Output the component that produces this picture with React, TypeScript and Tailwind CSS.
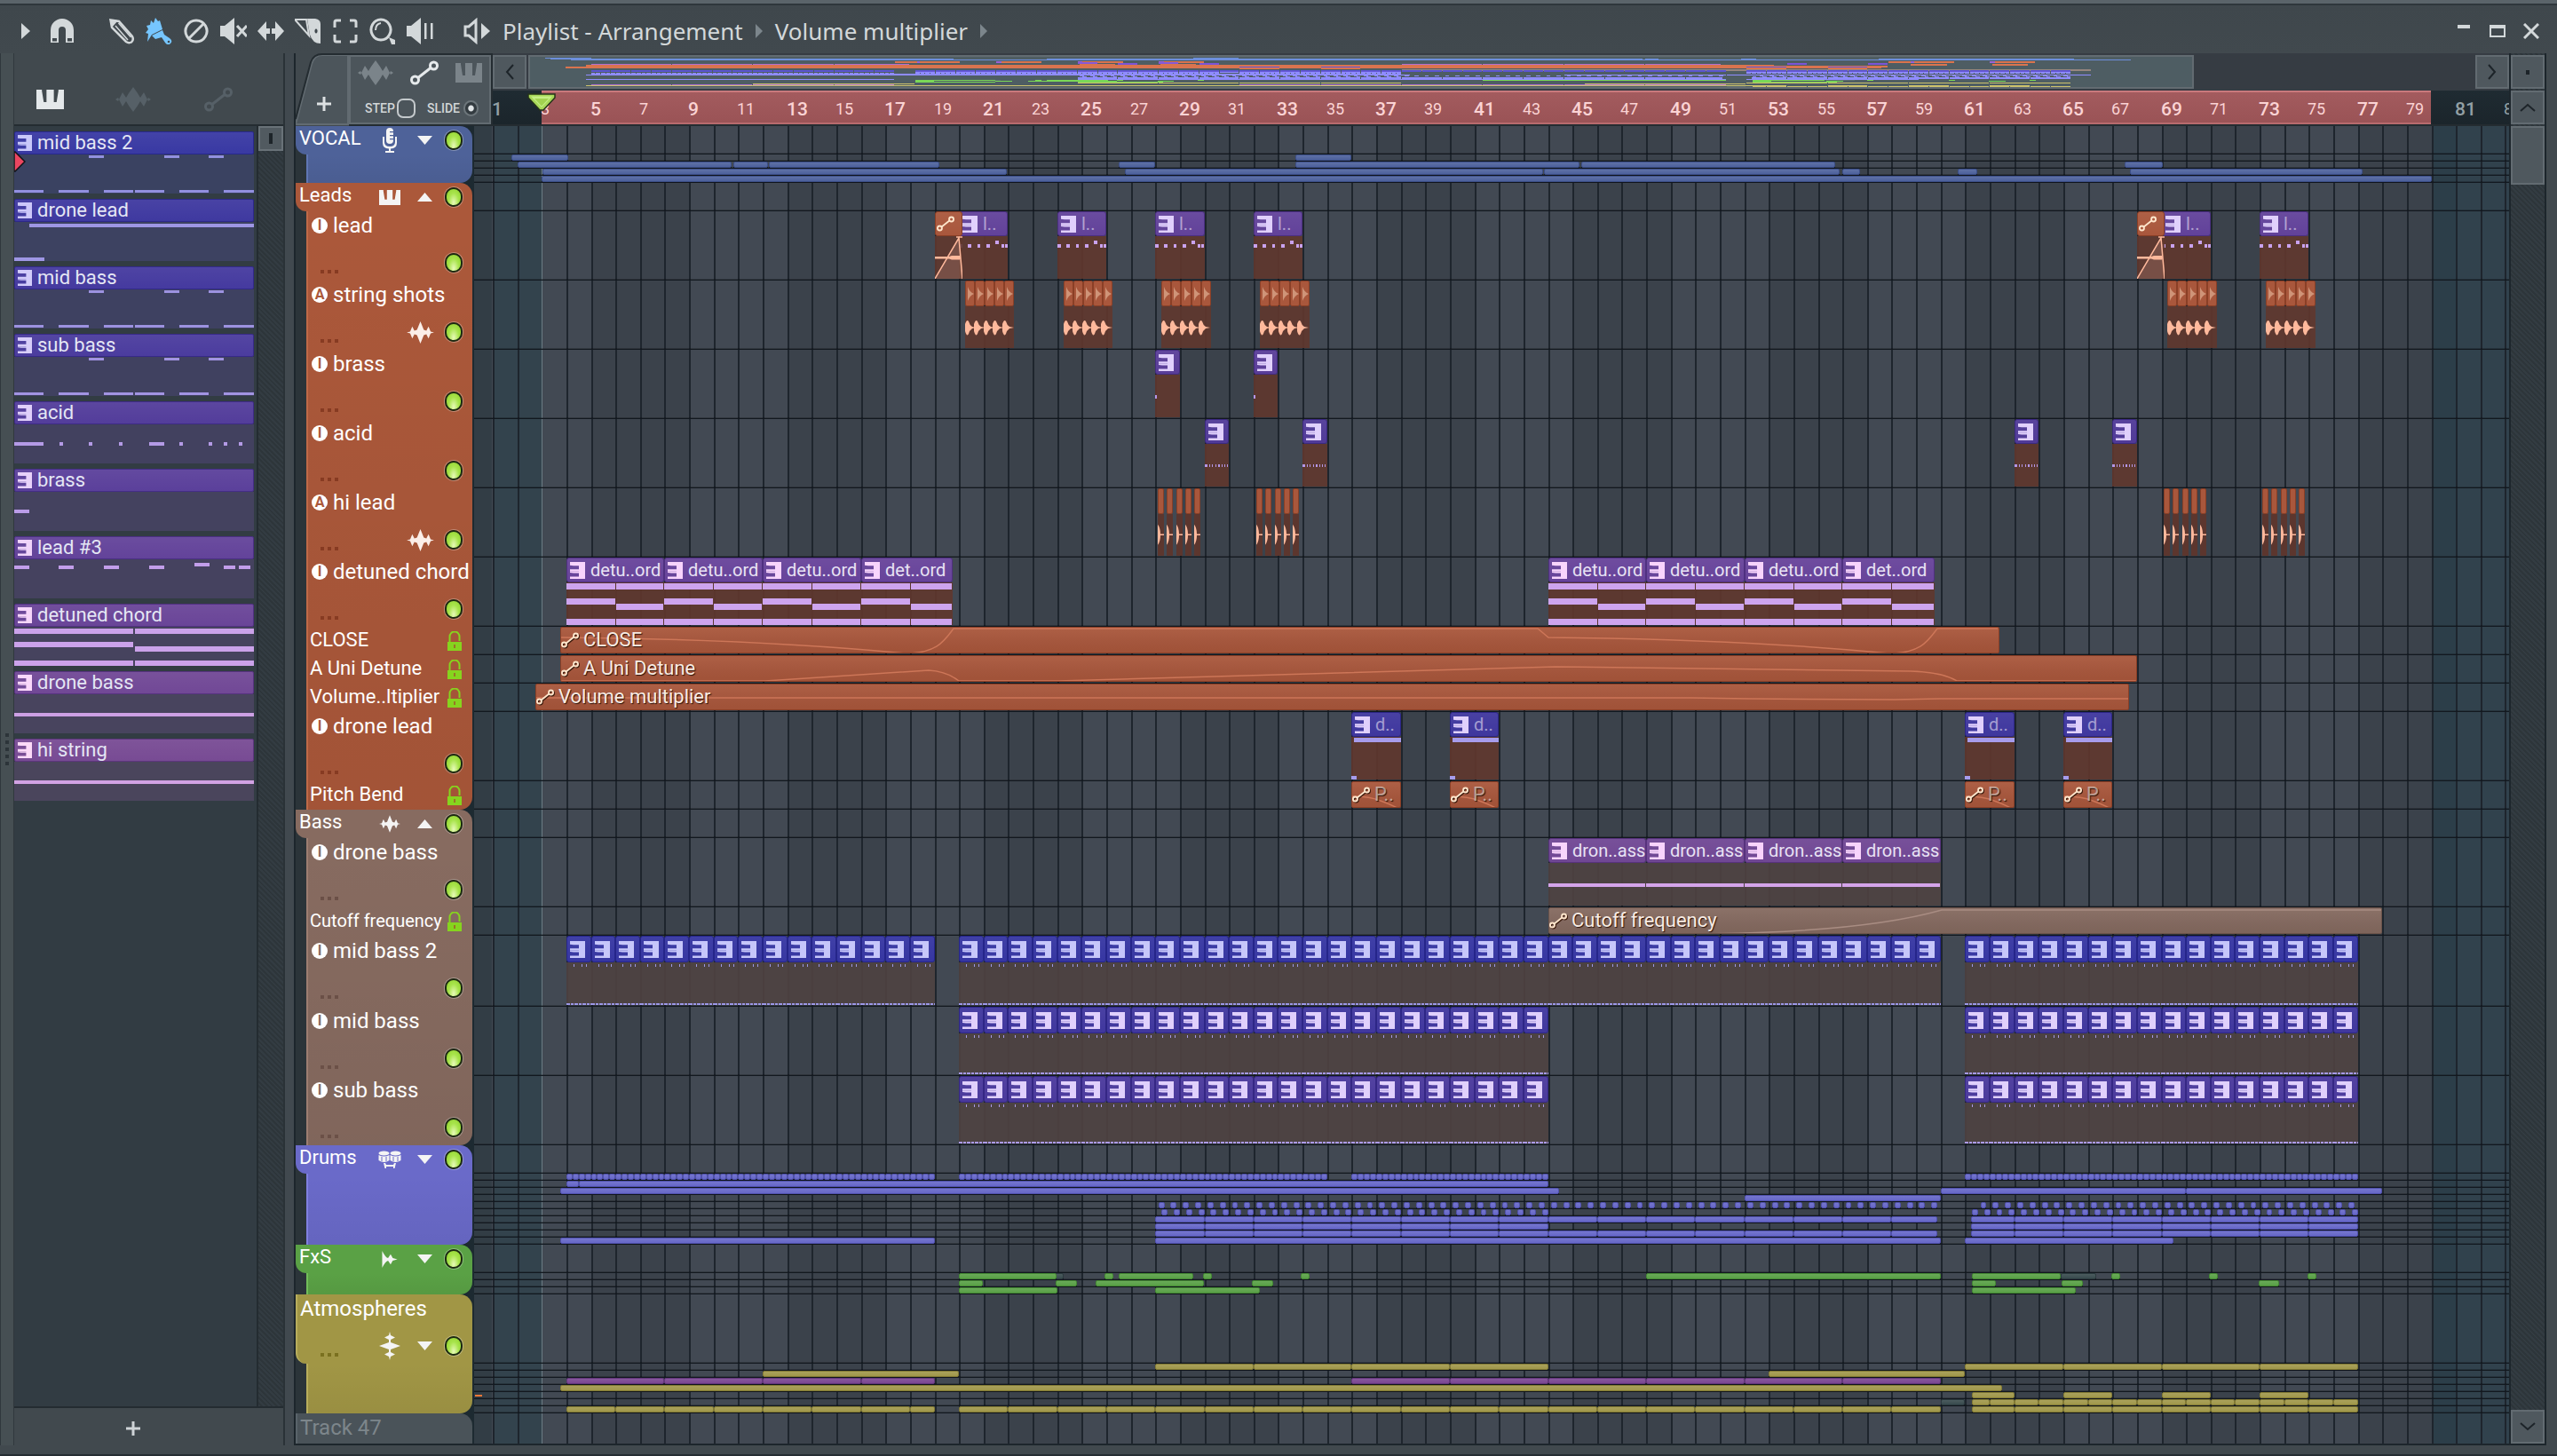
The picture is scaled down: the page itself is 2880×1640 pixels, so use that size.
import React from "react";

/* ---------- timeline scale ---------- */

const BAR = 27.64;
const ORIGIN = 21;
const MINI_BAR = 22.84;
const barX = (bar: number) => Math.round((bar - 1) * BAR + ORIGIN);

/* ---------- colours ---------- */

type Tone =
  | "vocal"
  | "orange"
  | "brown"
  | "drums"
  | "green"
  | "olive"
  | "violet"
  | "ghost"
  | "lead"
  | "brass"
  | "acid"
  | "detuned"
  | "droneLead"
  | "droneBass"
  | "midBass2"
  | "midBass"
  | "subBass";

const toneBg: Record<Tone, string> = {
  vocal: "bg-[#4d619c] border-[#3c4f88]",
  orange: "bg-[#a9573c] border-[#8a3f26]",
  brown: "bg-[#856a60] border-[#6b534a]",
  drums: "bg-[#6667c8] border-[#5051ac]",
  green: "bg-[#59a046] border-[#448834]",
  olive: "bg-[#a0974a] border-[#827a34]",
  violet: "bg-[#7a4692] border-[#63367c]",
  ghost: "bg-[#384a4d] border-[#2b3a3e]",
  lead: "bg-[#62429a] border-[#4b2f82]",
  brass: "bg-[#593d98] border-[#432b80]",
  acid: "bg-[#503a98] border-[#3b2980]",
  detuned: "bg-[#67439a] border-[#4f3080]",
  droneLead: "bg-[#3f379e] border-[#2c2686]",
  droneBass: "bg-[#704794] border-[#57327c]",
  midBass2: "bg-[#3636a2] border-[#25258a]",
  midBass: "bg-[#40379e] border-[#2d2686]",
  subBass: "bg-[#4a399c] border-[#352784]",
};

const noteFill: Record<string, string> = {
  lead: "#c9a2ee",
  brass: "#b896ea",
  acid: "#b496e6",
  detuned: "#cda4ee",
  droneLead: "#a79cec",
  droneBass: "#d4a4ea",
  midBass2: "#9c98e8",
  midBass: "#a69ae8",
  subBass: "#ac9ae8",
};

const miniFill: Record<Tone, string> = {
  vocal: "#6d8fdc",
  orange: "#d9744f",
  brown: "#97867f",
  drums: "#8f8cff",
  green: "#7ad858",
  olive: "#cdc26c",
  violet: "#b070d0",
  ghost: "#5a6c70",
  lead: "#9a62d8",
  brass: "#8458d8",
  acid: "#7a54d8",
  detuned: "#b070d0",
  droneLead: "#6058d8",
  droneBass: "#b070c8",
  midBass2: "#5a54d0",
  midBass: "#6658d8",
  subBass: "#8f8cff",
};

/* ---------- clips ---------- */

type Shape =
  | "thin"
  | "auto"
  | "lead"
  | "fade"
  | "hits"
  | "slices"
  | "brass"
  | "acid"
  | "chord"
  | "droneLead"
  | "droneBass"
  | "bass";

interface Clip {
  start: number;
  end: number;
  tone: Tone;
  shape: Shape;
  label?: string;
  faint?: boolean;
  curve?: string;
}

const thin = (tone: Tone, spans: number[][]): Clip[] =>
  spans.map(([start, end]) => ({ start, end, tone, shape: "thin" }));

function run(tone: Tone, from: number, to: number, step: number, size = step): Clip[] {
  const out: Clip[] = [];
  for (let b = from; b < to - 0.05; b += step) {
    out.push({ start: b, end: Math.min(b + size, to), tone, shape: "thin" });
  }
  return out;
}

const each = (starts: number[], length: number, tone: Tone, shape: Shape, extra: Partial<Clip> = {}): Clip[] =>
  starts.map((start) => ({ start, end: start + length, tone, shape, ...extra }));

const bars = (from: number, to: number) => Array.from({ length: to - from }, (_, i) => from + i);

interface Track {
  name: string;
  size: "big" | "tall" | "lock" | "sub";
  badge?: "I" | "A";
  wave?: boolean;
  long?: boolean;
  clips: Clip[];
}

interface Group {
  name: string;
  color: string;
  edge: string;
  dots: string;
  icon: "mic" | "piano" | "wave" | "drums" | "decay" | "waveUp";
  open: boolean;
  big?: boolean;
  tracks: Track[];
}

const sub = (clips: Clip[]): Track => ({ name: "", size: "sub", clips });

const pitchCurve = "M0 16 Q20 16 32 21 Q46 26 54 31";

const groups: Group[] = [
  {
    name: "VOCAL",
    color: "bg-[#4e6299]",
    edge: "border-[#6076b4]",
    dots: "bg-[#2e3c66]",
    icon: "mic",
    open: false,
    tracks: [
      sub(thin("vocal", [[1.75, 4.08], [33.7, 36]])),
      sub(thin("vocal", [[2, 10.75], [10.8, 12.2], [12.25, 19.2], [26.5, 28], [33.7, 45.3], [45.35, 55.7], [67.5, 69.05]])),
      sub(thin("vocal", [[3.02, 21.95], [26.75, 43.8], [43.85, 55.9], [56, 56.7], [60.7, 61.5], [67.7, 77.2]])),
      sub(thin("vocal", [[3, 80]])),
    ],
  },
  {
    name: "Leads",
    color: "bg-[#ab583a]",
    edge: "border-[#be6a48]",
    dots: "bg-[#873b22]",
    icon: "piano",
    open: true,
    tracks: [
      {
        name: "lead",
        size: "big",
        badge: "I",
        clips: [
          ...each([20, 24, 28, 32, 69, 73], 2, "lead", "lead", { label: "l..", faint: true }),
          ...each([19, 68], 1.13, "orange", "fade"),
        ],
      },
      {
        name: "string shots",
        size: "big",
        badge: "A",
        wave: true,
        clips: each([20.23, 24.25, 28.25, 32.25, 69.25, 73.25], 2.02, "orange", "hits"),
      },
      { name: "brass", size: "big", badge: "I", clips: each([28, 32], 1, "brass", "brass") },
      { name: "acid", size: "big", badge: "I", clips: each([30, 34, 63, 67], 1, "acid", "acid") },
      { name: "hi lead", size: "big", badge: "A", wave: true, clips: each([28.1, 32.1, 69.1, 73.1], 1.8, "orange", "slices") },
      {
        name: "detuned chord",
        size: "big",
        badge: "I",
        clips: [
          ...each([4, 8, 12, 44, 48, 52], 4, "detuned", "chord", { label: "detu..ord" }),
          ...each([16, 56], 3.74, "detuned", "chord", { label: "det..ord" }),
        ],
      },
      {
        name: "CLOSE",
        size: "lock",
        clips: [
          {
            start: 3.75,
            end: 62.38,
            tone: "orange",
            shape: "auto",
            label: "CLOSE",
            curve: "M0 11 Q220 13 388 29 C424 29 432 14 442 1 H1100 L1112 11 Q1332 13 1496 29 C1532 29 1540 14 1550 1 H1618",
          },
        ],
      },
      {
        name: "A Uni Detune",
        size: "lock",
        clips: [
          {
            start: 3.75,
            end: 68,
            tone: "orange",
            shape: "auto",
            label: "A Uni Detune",
            curve: "M0 28 H230 L414 16 Q434 17 448 28 H560 L1120 12 L1520 17 Q1556 18 1572 28 H1776",
          },
        ],
      },
      {
        name: "Volume..ltiplier",
        size: "lock",
        clips: [
          {
            start: 2.73,
            end: 67.68,
            tone: "orange",
            shape: "auto",
            label: "Volume multiplier",
            curve: "M0 15 H1300 Q1420 17 1530 17 L1580 16 H1794",
          },
        ],
      },
      {
        name: "drone lead",
        size: "big",
        badge: "I",
        clips: each([36, 40, 61, 65], 2, "droneLead", "droneLead", { label: "d..", faint: true }),
      },
      {
        name: "Pitch Bend",
        size: "lock",
        clips: each([36, 40, 61, 65], 2, "orange", "auto", { label: "P..", faint: true, curve: pitchCurve }),
      },
    ],
  },
  {
    name: "Bass",
    color: "bg-[#876b60]",
    edge: "border-[#9c7e72]",
    dots: "bg-[#6b5047]",
    icon: "wave",
    open: true,
    tracks: [
      { name: "drone bass", size: "big", badge: "I", clips: each([44, 48, 52, 56], 4, "droneBass", "droneBass", { label: "dron..ass" }) },
      {
        name: "Cutoff frequency",
        size: "lock",
        long: true,
        clips: [
          {
            start: 44,
            end: 78,
            tone: "brown",
            shape: "auto",
            label: "Cutoff frequency",
            curve: "M0 29 H160 Q350 28 442 2 H940",
          },
        ],
      },
      { name: "mid bass 2", size: "tall", badge: "I", clips: each([...bars(4, 19), ...bars(20, 60), ...bars(61, 77)], 1, "midBass2", "bass") },
      { name: "mid bass", size: "big", badge: "I", clips: each([...bars(20, 44), ...bars(61, 77)], 1, "midBass", "bass") },
      { name: "sub bass", size: "big", badge: "I", clips: each([...bars(20, 44), ...bars(61, 77)], 1, "subBass", "bass") },
    ],
  },
  {
    name: "Drums",
    color: "bg-[#6a6ac9]",
    edge: "border-[#8080e0]",
    dots: "bg-[#4747a0]",
    icon: "drums",
    open: false,
    tracks: [
      sub([...run("drums", 4, 19, 0.25), ...run("drums", 20, 35, 0.25), ...run("drums", 36, 44, 0.25), ...run("drums", 61, 77, 0.25)]),
      sub(thin("drums", [[4, 4.5], [4.5, 44]])),
      sub(thin("drums", [[3.75, 44.45], [60, 70], [70, 78]])),
      sub(thin("drums", [[52, 60]])),
      sub([...run("drums", 28.12, 60, 0.5, 0.25), ...run("drums", 61.62, 77, 0.5, 0.25)]),
      sub([...run("drums", 28.25, 44.05, 0.5, 0.25), ...run("drums", 61.27, 77, 0.5, 0.25)]),
      sub([...run("drums", 28, 58, 2), ...thin("drums", [[58, 59.85], [61.25, 63]]), ...run("drums", 63, 77, 2)]),
      sub([...run("drums", 28, 44, 2), ...thin("drums", [[61.25, 63]]), ...run("drums", 63, 77, 2)]),
      sub([...run("drums", 28, 58, 2), ...thin("drums", [[58, 59.85], [61.25, 63]]), ...run("drums", 63, 77, 2)]),
      sub(thin("drums", [[3.75, 19], [28, 60], [61, 69.5]])),
    ],
  },
  {
    name: "FxS",
    color: "bg-[#5aa145]",
    edge: "border-[#72bd5a]",
    dots: "bg-[#3c7a2e]",
    icon: "decay",
    open: false,
    tracks: [
      sub([
        ...thin("ghost", [[23.9, 24.27], [64.9, 66.35]]),
        ...thin("green", [
          [20, 23.97], [25.93, 26.28], [26.5, 29.53], [29.95, 30.3], [33.93, 34.27], [48, 60],
          [61.27, 64.9], [66.95, 67.3], [70.95, 71.3], [74.95, 75.3],
        ]),
      ]),
      sub(thin("green", [[20, 20.98], [23.93, 24.8], [25.57, 29.97], [31.95, 32.8], [61.27, 62.25], [64.93, 65.78], [72.95, 73.8]])),
      sub(thin("green", [[20, 24], [28, 32.25], [61.27, 65.5]])),
    ],
  },
  {
    name: "Atmospheres",
    color: "bg-[#a19645]",
    edge: "border-[#b8ae5c]",
    dots: "bg-[#7a701f]",
    icon: "waveUp",
    open: false,
    big: true,
    tracks: [
      sub([...run("olive", 28, 44, 4), ...run("olive", 61, 77, 4)]),
      sub(thin("olive", [[12, 20], [53, 61]])),
      sub([...run("violet", 4, 19, 4), ...run("violet", 36, 60, 4)]),
      sub(thin("olive", [[3.75, 62.5]])),
      sub(thin("olive", [[61.27, 63], [65, 67], [69, 71], [73, 75]])),
      sub([...thin("ghost", [[60, 61]]), ...thin("olive", [[61.27, 62]]), ...run("olive", 62, 77, 1)]),
      sub([...run("olive", 4, 19, 2), ...run("olive", 20, 60, 2), ...thin("olive", [[61.27, 63]]), ...run("olive", 63, 77, 2)]),
    ],
  },
];

/* ---------- icons ---------- */

function PianoIcon({ className = "" }: { className?: string }) {
  return (
    <svg viewBox="0 0 30 22" className={className} fill="currentColor" preserveAspectRatio="none">
      <path d="M0 0h6v1.500L8 14h3V0h8v14h3l2-12.500V0h6v22H0z" />
    </svg>
  );
}

function WaveIcon({ className = "" }: { className?: string }) {
  return (
    <svg viewBox="0 0 40 28" className={className} fill="currentColor">
      <path d="M0 14 L3 12 L4 14 L8 6 L12 12 L15 7 L20 0 L25 7 L28 12 L32 6 L36 14 L37 12 L40 14 L37 16 L36 14 L32 22 L28 16 L25 21 L20 28 L15 21 L12 16 L8 22 L4 14 L3 16 Z" />
    </svg>
  );
}

function SmallWaveIcon({ className = "" }: { className?: string }) {
  return (
    <svg viewBox="0 0 32 26" className={className} fill="currentColor">
      <path d="M0 13l4-1 2.500-6 2.500 5 3-1 4-10 4 10 3 1 2.500-5 2.500 6 4 1-4 1-2.500 6-2.500-5-3 1-4 10-4-10-3-1-2.500 5L4 14z" />
    </svg>
  );
}

function AutoIcon({ className = "", stroke = 3 }: { className?: string; stroke?: number }) {
  return (
    <svg viewBox="0 0 32 28" className={className} fill="none" stroke="currentColor" strokeWidth={stroke}>
      <circle cx="5.500" cy="22" r="4" />
      <circle cx="26.500" cy="6" r="4" />
      <path d="M9 19.500 L23 8.500" />
    </svg>
  );
}

function PatternIcon({ className = "" }: { className?: string }) {
  return (
    <svg viewBox="0 0 17 19" className={className} fill="currentColor">
      <path d="M0 0h17v19H0v-2.500h10v-4H4L0 12v-1h10v-.2H0V8.200h10v-4H4L0 3.800V2.500h0z" />
      <path d="M0 3.500h10v5H0z" fillOpacity="0" />
      <path d="M0 2.500h10v2H0zM0 11h10v1H0z" fillOpacity="0" />
    </svg>
  );
}

function GroupIcon({ kind }: { kind: Group["icon"] }) {
  if (kind === "mic")
    return (
      <svg viewBox="0 0 16 28" className="h-7 w-4" fill="currentColor">
        <rect x="4" y="0" width="8" height="18" rx="4" />
        <path d="M0 10h2v6q0 5 6 5t6-5v-6h2v7q0 6-7 6.500V26h4v2H3v-2h4v-2.500Q0 23 0 17z" />
        <path d="M8 4h5v1.200H8zM8 8h5v1.200H8zM8 12h5v1.200H8z" fill="#4e6299" />
      </svg>
    );
  if (kind === "piano") return <PianoIcon className="h-[17px] w-6" />;
  if (kind === "wave") return <SmallWaveIcon className="h-5 w-6" />;
  if (kind === "drums")
    return (
      <svg viewBox="0 0 26 20" className="h-5 w-[26px]" fill="currentColor">
        <ellipse cx="6.500" cy="3" rx="6" ry="2.500" />
        <ellipse cx="19.500" cy="3" rx="6" ry="2.500" />
        <path d="M.5 5q6 3 12 0v6q-6 4-12 0zM13.500 5q6 3 12 0v6q-6 4-12 0z" />
        <path d="M4 7v5M9 7v5M17 7v5M22 7v5" stroke="#6a6ac9" strokeWidth="1" />
        <path d="M6 14h2l1 2h8l1-2h2l-1.500 6h-1.500v-2H9v2H7.500z" />
      </svg>
    );
  if (kind === "decay")
    return (
      <svg viewBox="0 0 18 20" className="h-[19px] w-[18px]" fill="currentColor">
        <path d="M0 0 Q4 8 7 8.500 L10 4 L12.500 8.500 L18 10 L12.500 11.500 L10 16 L7 11.500 Q4 12 0 20z" />
      </svg>
    );
  return (
    <svg viewBox="0 0 24 32" className="h-8 w-6" fill="currentColor">
      <path d="M12 0l1 4 5 2.500-5 2.500v3l11 4-11 4v3l5 2.500-5 2.500-1 4-1-4-5-2.500 5-2.500v-3L0 16l11-4V9L6 6.500 11 4z" />
    </svg>
  );
}

function Led() {
  return (
    <button
      aria-label="Mute switch"
      className="h-[22px] w-5 shrink-0 rounded-full border-2 border-[#1c2a12] bg-radial-[at_50%_85%] from-[#e8fab8] via-[#a8e44c] to-[#8cd026] shadow-[0_0_0_1px_rgba(255,255,255,0.3)]"
    />
  );
}

function Lock() {
  return (
    <svg viewBox="0 0 16 22" className="h-[22px] w-4 shrink-0 text-[#86d41e]" fill="currentColor">
      <path d="M2.500 12V6a5.500 5.500 0 0 1 11 0v5" fill="none" stroke="currentColor" strokeWidth="2" />
      <path d="M0 12h16v10H0z" />
      <path d="M7.300 15h1.400v4H7.300z" fill="#a0502c" />
    </svg>
  );
}

/* ---------- title bar ---------- */

const toolIcons: { name: string; active?: boolean; art: React.ReactNode }[] = [
  {
    name: "Draw",
    art: (
      <>
        <path d="M2.500 2.500 L12 4 L27 21 Q29 25 26 27.500 Q23 29 20 27 L4 11z" fill="none" stroke="currentColor" strokeWidth="2.500" />
        <path d="M8 9 L22 25 M11.500 6 L25.500 22" stroke="currentColor" strokeWidth="1.500" />
        <path d="M2 2l9 1-7 8z" />
      </>
    ),
  },
  {
    name: "Paint",
    active: true,
    art: (
      <>
        <path d="M1 9 L5 8 L6 3 L9 6 L11 0 L14 4 L16 3 L19 13 L7 19 L2 27 L3 18 L0 17 L3 13z" />
        <path d="M7 20 L19 14 L21 19 L27 23 Q31 26 28 29 Q25 32 22 28 L18 22 L11 24z" />
        <circle cx="26" cy="27" r="1.300" fill="#40484e" />
      </>
    ),
  },
  {
    name: "Delete",
    art: <path d="M15 3a12 12 0 1 0 .01 0M23.500 6.500l-17 17" fill="none" stroke="currentColor" strokeWidth="3" />,
  },
  {
    name: "Mute",
    art: (
      <>
        <path d="M0 9h5L16 0v30L5 21H0Q-1 15 0 9z" />
        <path d="M19 9l11 12M30 9L19 21" stroke="currentColor" strokeWidth="3" />
      </>
    ),
  },
  {
    name: "Slip",
    art: (
      <>
        <path d="M0 15L10 4v8h4v6h-4v8z" />
        <path d="M30 15L20 4v8h-4v6h4v8z" />
      </>
    ),
  },
  {
    name: "Slice",
    art: (
      <>
        <path d="M0 2h13l3 18L0 2z" fill="none" stroke="currentColor" strokeWidth="2" />
        <path d="M14 1h9q6 1 6 6v22q-9 0-12-10zM24 12.500a1.600 2.500 0 1 0 .01 0z" fillRule="evenodd" />
      </>
    ),
  },
  {
    name: "Select",
    art: (
      <path
        d="M3 11V5q0-2 2-2h5M20 3h5q2 0 2 2v6M27 19v6q0 2-2 2h-5M10 27H5q-2 0-2-2v-6"
        fill="none"
        stroke="currentColor"
        strokeWidth="3"
      />
    ),
  },
  {
    name: "Zoom",
    art: (
      <>
        <path d="M13 2a11 11.500 0 1 0 .01 0" fill="none" stroke="currentColor" strokeWidth="3" />
        <path d="M7 14q0-7 6-8" fill="none" stroke="currentColor" strokeWidth="2" />
        <path d="M22 22l7 3v5h-4z" />
      </>
    ),
  },
  {
    name: "Play selection",
    art: (
      <>
        <path d="M0 9h5L16 0v30L5 21H0Q-1 15 0 9z" />
        <path d="M20 6h2.500v18H20zM27 6h2.500v18H27z" />
      </>
    ),
  },
];

const btn = "flex shrink-0 items-center justify-center";

function TitleBar() {
  return (
    <header className="flex h-14 items-center border-t-2 border-[#2f373c] bg-linear-to-b from-[#3f474c] to-[#41494e] pt-1 pl-6 text-[#d3d8da]">
      <button aria-label="Menu" className={`${btn} w-[10px]`}>
        <svg viewBox="0 0 10 18" className="h-[18px] w-[10px]" fill="currentColor"><path d="M0 0l10 9-10 9z" /></svg>
      </button>
      <button aria-label="Snap" className={`${btn} ml-[22px] w-7`}>
        <svg viewBox="0 0 28 30" className="h-[30px] w-7" fill="currentColor">
          <path d="M1 28V14a13 13 0 0 1 26 0v14h-9V14a4 4 0 0 0-8 0v14z" />
          <path d="M3 23h5v3.500H3zM20 23h5v3.500h-5z" fill="#40484d" />
        </svg>
      </button>
      <nav aria-label="Tools" className="ml-[38px] flex gap-3">
        {toolIcons.map((t) => (
          <button key={t.name} aria-label={t.name} className={`${btn} w-[30px] ${t.active ? "text-[#76c6ff]" : ""}`}>
            <svg viewBox="0 0 30 30" className="h-[30px] w-[30px]" fill="currentColor">{t.art}</svg>
          </button>
        ))}
      </nav>
      <button aria-label="Preview" className={`${btn} ml-[34px] w-[30px]`}>
        <svg viewBox="0 0 30 30" className="h-[30px] w-[30px]" fill="currentColor">
          <path d="M2 10h4l8-7v24l-8-7H2z" fill="none" stroke="currentColor" strokeWidth="3" />
          <path d="M20 6l10 9-10 9z" />
        </svg>
      </button>
      <h1 className="ml-[14px] flex items-center font-['Noto_Sans'] text-[26px] leading-8">
        <span>Playlist - Arrangement</span>
        <svg viewBox="0 0 8 16" className="mx-[14px] h-4 w-2 text-[#7c868c]" fill="currentColor"><path d="M0 0l8 8-8 8z" /></svg>
        <span>Volume multiplier</span>
        <svg viewBox="0 0 8 16" className="mx-[14px] h-4 w-2 text-[#7c868c]" fill="currentColor"><path d="M0 0l8 8-8 8z" /></svg>
      </h1>
      <div className="ml-auto flex items-center gap-5 pr-5">
        <button aria-label="Minimize" className={`${btn} h-[18px] w-[18px]`}>
          <svg viewBox="0 0 18 18" className="h-[18px] w-[18px]" fill="currentColor"><path d="M2 2h14v4H2z" /></svg>
        </button>
        <button aria-label="Maximize" className={`${btn} h-[18px] w-[18px]`}>
          <svg viewBox="0 0 18 18" className="h-[18px] w-[18px]" fill="currentColor"><path d="M0 2h18v14H0zM2 6v8h14V6z" fillRule="evenodd" /></svg>
        </button>
        <button aria-label="Close" className={`${btn} h-[18px] w-[18px]`}>
          <svg viewBox="0 0 18 18" className="h-[18px] w-[18px]" fill="none" stroke="currentColor" strokeWidth="3"><path d="M1 1l16 16M17 1L1 17" /></svg>
        </button>
      </div>
    </header>
  );
}

/* ---------- picker ---------- */

interface PickerItem {
  name: string;
  head: string;
  body: string;
  icon: string;
  fill: string;
  notes: number[][];
}

const bassNotes = [
  [84, 1, 17, 3], [168, 1, 17, 3], [218, 1, 17, 3],
  [0, 40, 33, 3], [50, 40, 34, 3], [101, 40, 33, 3], [135, 40, 33, 3], [185, 40, 33, 3], [235, 40, 34, 3],
];

const picker: PickerItem[] = [
  { name: "mid bass 2", head: "bg-[#3939a3] border-[#28288c]", body: "bg-[#3a4261]", icon: "text-[#c8c8fa]", fill: "#9290e0", notes: bassNotes },
  { name: "drone lead", head: "bg-[#3f39a0] border-[#2d288a]", body: "bg-[#3d4261]", icon: "text-[#cdc8fa]", fill: "#9e96e4", notes: [[17, 2, 252, 4], [0, 40, 34, 4]] },
  { name: "mid bass", head: "bg-[#453a9f] border-[#32298a]", body: "bg-[#3e4161]", icon: "text-[#d2ccfa]", fill: "#9c92e0", notes: bassNotes },
  { name: "sub bass", head: "bg-[#4b3c9e] border-[#372a88]", body: "bg-[#404160]", icon: "text-[#d8cefa]", fill: "#a294e2", notes: bassNotes },
  {
    name: "acid", head: "bg-[#533d9b] border-[#3e2b86]", body: "bg-[#42415f]", icon: "text-[#e0d0fa]", fill: "#b49ae6",
    notes: [[0, 20, 33, 4], [51, 20, 4, 4], [84, 20, 4, 4], [118, 20, 4, 4], [151, 20, 17, 4], [185, 20, 4, 4], [218, 20, 4, 4], [235, 20, 4, 4], [252, 20, 4, 4]],
  },
  { name: "brass", head: "bg-[#5b409b] border-[#442d86]", body: "bg-[#44425f]", icon: "text-[#e8d2fa]", fill: "#ba9ce8", notes: [[0, 20, 17, 4]] },
  {
    name: "lead #3", head: "bg-[#63439a] border-[#4b2f84]", body: "bg-[#45425f]", icon: "text-[#f0d4fa]", fill: "#c29eea",
    notes: [[0, 7, 17, 4], [50, 7, 17, 4], [101, 7, 17, 4], [151, 7, 17, 4], [202, 4, 17, 4], [235, 7, 13, 4], [252, 7, 13, 4]],
  },
  {
    name: "detuned chord", head: "bg-[#6a4598] border-[#513082]", body: "bg-[#46435e]", icon: "text-[#f6d6fa]", fill: "#cba2ea",
    notes: [[0, 2, 134, 6], [135, 2, 134, 6], [0, 17, 134, 6], [135, 22, 134, 6], [0, 38, 134, 6], [135, 38, 134, 6]],
  },
  { name: "drone bass", head: "bg-[#714896] border-[#573280]", body: "bg-[#48445e]", icon: "text-[#fad8fa]", fill: "#cda0e4", notes: [[0, 21, 269, 4]] },
  { name: "hi string", head: "bg-[#784b94] border-[#5d357e]", body: "bg-[#4a455c]", icon: "text-[#fcdaf8]", fill: "#d2a2e4", notes: [[0, 21, 269, 4]] },
];

const hatch = "bg-[#333c42] bg-[repeating-linear-gradient(45deg,transparent_0_2px,rgba(0,0,0,0.12)_2px_4px)]";

function Picker() {
  return (
    <aside className="flex w-[305px] shrink-0 flex-col border-r-2 border-[#2a3237]">
      <div className="flex h-20 items-center pt-6 pl-[25px]">
        <button aria-label="Patterns" className={`${btn} w-[31px] text-[#e4e8ea]`}><PianoIcon className="h-[22px] w-[31px]" /></button>
        <button aria-label="Audio clips" className={`${btn} ml-[58px] w-10 text-[#566067]`}><WaveIcon className="h-7 w-10" /></button>
        <button aria-label="Automation clips" className={`${btn} ml-[60px] w-8 text-[#566067]`}><AutoIcon className="h-7 w-8" /></button>
      </div>
      <div className="flex flex-1 border-y-2 border-[#242c31]">
        <ul className="relative flex flex-1 flex-col gap-[6px] bg-[#323c43] pt-[6px] pr-[3px]">
          {picker.map((p) => (
            <li key={p.name}>
              <button className="block w-full text-left">
                <span className={`flex h-[26px] items-center gap-[6px] rounded-[2px] border bg-linear-to-b from-white/5 to-transparent pl-[3px] ${p.head}`}>
                  <PatternIcon className={`h-[18px] w-4 ${p.icon}`} />
                  <span className="text-[22px] leading-6 text-[#e4e6f4]">{p.name}</span>
                </span>
                <svg viewBox="0 0 269 44" preserveAspectRatio="none" className={`h-11 w-full ${p.body}`} shapeRendering="crispEdges">
                  {p.notes.map(([x, y, w, h], i) => (
                    <rect key={i} x={x} y={y} width={w} height={h} fill={p.fill} />
                  ))}
                </svg>
              </button>
            </li>
          ))}
          <svg viewBox="0 0 13 24" className="absolute top-7 left-0 h-6 w-[13px]">
            <path d="M0 1h1l11 11L1 23H0z" fill="#ec4660" stroke="#101418" strokeWidth="1.500" />
          </svg>
        </ul>
        <div className={`flex w-[30px] flex-col border-l-2 border-[#242c31] ${hatch}`}>
          <button aria-label="Picker scroll" className={`${btn} h-7 w-full border-2 border-[#697278] bg-[#515a60]`}>
            <span className="h-3 w-1 bg-[#1d2429]" />
          </button>
        </div>
      </div>
      <button aria-label="Add pattern" className={`${btn} h-[42px] w-full pt-1 pr-9 text-[#cfd4d7]`}>
        <svg viewBox="0 0 16 16" className="h-4 w-4" fill="currentColor"><path d="M6.500 0h3v6.500H16v3H9.500V16h-3V9.500H0v-3h6.500z" /></svg>
      </button>
    </aside>
  );
}

/* ---------- playlist top strip ---------- */

function ModePanel() {
  return (
    <div className="flex h-[78px] w-[160px] flex-col justify-between border-2 border-[#626b71] bg-[#4c555b] px-2 pt-1 pb-1">
      <div className="flex items-center justify-between">
        <button aria-label="Audio" className={`${btn} text-[#7b848a]`}><WaveIcon className="h-7 w-10" /></button>
        <button aria-label="Automation" className={`${btn} text-[#e6eaec]`}><AutoIcon className="h-7 w-8" /></button>
        <button aria-label="Pattern" className={`${btn} text-[#7b848a]`}><PianoIcon className="h-[22px] w-[30px]" /></button>
      </div>
      <div className="flex items-center justify-between pl-2 pr-1 text-[14px] leading-6 font-medium text-[#d2d6d8]">
        <label className="flex items-center gap-[2px]">
          STEP
          <input type="checkbox" className="h-[22px] w-[21px] appearance-none rounded-[7px] border-2 border-[#c4c9cc]" />
        </label>
        <label className="flex items-center gap-1">
          SLIDE
          <input
            type="radio"
            defaultChecked
            className="h-[18px] w-[17px] appearance-none rounded-full border-2 border-[#6d767b] bg-radial from-[#e0e4e6] from-30% to-[#333b40] to-40%"
          />
        </label>
      </div>
    </div>
  );
}

function flatTracks(): Clip[][] {
  return groups.flatMap((g) => [[] as Clip[], ...g.tracks.map((t) => t.clips)]);
}

function MiniMap() {
  return (
    <div className="flex h-[42px] items-center bg-[#363c43]">
      <button aria-label="Scroll left" className={`${btn} h-[38px] w-[38px] border-2 border-[#626b71] bg-[#4f585e]`}>
        <svg viewBox="0 0 10 18" className="h-5 w-[10px]" fill="none" stroke="#1d2429" strokeWidth="2"><path d="M9 1L2 9l7 8" /></svg>
      </button>
      <div className="flex flex-1">
        <div className="ml-[2px] h-[38px] w-[1876px] border-2 border-[#626b71] bg-[#4e5d63]">
          <svg className="h-[34px] w-full" shapeRendering="crispEdges">
            {flatTracks().map((clips, row) =>
              clips.map((c, i) => (
                <rect
                  key={`${row}-${i}`}
                  x={(c.start - 1) * MINI_BAR}
                  y={Math.round(row * 0.75)}
                  width={Math.max(2, (c.end - c.start) * MINI_BAR - 1)}
                  height={row > 5 && row < 22 ? 2 : 1}
                  fill={miniFill[c.tone]}
                />
              )),
            )}
          </svg>
        </div>
      </div>
      <button aria-label="Scroll right" className={`${btn} h-[38px] w-[38px] border-2 border-[#626b71] bg-[#4f585e]`}>
        <svg viewBox="0 0 10 18" className="h-5 w-[10px]" fill="none" stroke="#1d2429" strokeWidth="2"><path d="M1 1l7 8-7 8" /></svg>
      </button>
    </div>
  );
}

function Ruler() {
  const numbers = Array.from({ length: 42 }, (_, i) => 1 + i * 2);
  return (
    <div className="relative h-[38px] overflow-hidden bg-linear-to-b from-[#1f2b32] to-[#1b252b]">
      <div
        className="absolute inset-y-0 border-y-2 border-t-[#c9797c] border-b-[#b76b6e] bg-linear-to-b from-[#a35b5e] to-[#9a5356]"
        style={{ left: Math.round(2 * BAR), width: Math.round(77 * BAR) }}
      />
      {numbers.map((n) => {
        const big = n % 4 === 1;
        const inside = n >= 3 && n < 80;
        return (
          <span
            key={n}
            className={`absolute bottom-[3px] leading-7 ${big ? "text-[21px] font-medium" : "text-[18px]"} ${
              inside ? "text-[#fbd3d4]" : "text-[#93a0a5]"
            }`}
            style={{ left: Math.round((n - 1) * BAR) - 1 }}
          >
            {n}
          </span>
        );
      })}
      <svg viewBox="0 0 32 20" className="absolute top-[3px] h-5 w-8" style={{ left: Math.round(2 * BAR) - 16 }}>
        <path d="M1 1h30v4L18 19h-4L1 5z" fill="#a8d858" stroke="#26331a" strokeWidth="1.500" />
        <path d="M4 3.500h24L16 16z" fill="#c6ee86" />
        <path d="M8 6h16l-8 8.500z" fill="#a2d250" />
      </svg>
    </div>
  );
}

/* ---------- track headers ---------- */

function Dots({ tone }: { tone: string }) {
  return (
    <span className="flex gap-1 self-end">
      {[0, 1, 2].map((i) => <span key={i} className={`h-1 w-1 ${tone}`} />)}
    </span>
  );
}

const badgeText: Record<string, string> = {
  Leads: "text-[#ab583a]",
  Bass: "text-[#876b60]",
};

function TrackHeader({ track, group }: { track: Track; group: Group }) {
  if (track.size === "sub") return <div className="h-2" />;
  if (track.size === "lock")
    return (
      <div className="flex h-8 items-center justify-between pr-3 pl-[2px]">
        <span className={`self-start leading-[30px] whitespace-nowrap text-white ${track.long ? "text-[20px]" : "text-[22px]"}`}>
          {track.name}
        </span>
        <Lock />
      </div>
    );
  return (
    <div className={track.size === "tall" ? "h-20 pt-[1px]" : "h-[78px]"}>
      <div className="flex h-8 items-center gap-[6px] pl-1">
        <span className={`${btn} h-[18px] w-[18px] rounded-full bg-white text-[16px] leading-[18px] font-bold ${badgeText[group.name]}`}>
          {track.badge}
        </span>
        <span className="text-[24px] leading-8 whitespace-nowrap text-white">{track.name}</span>
      </div>
      <div className="mt-[14px] flex h-6 items-center pr-[11px] pl-[14px]">
        <Dots tone={group.dots} />
        <span className="flex-1" />
        {track.wave && <SmallWaveIcon className="mr-3 h-[25px] w-[31px] text-[#fbeee8]" />}
        <Led />
      </div>
    </div>
  );
}

function GroupHeader({ group }: { group: Group }) {
  const controls = (
    <>
      <span className={`${btn} w-8 text-[#f4f4f4]`}><GroupIcon kind={group.icon} /></span>
      <button aria-label={group.open ? "Collapse group" : "Expand group"} className="mr-[14px] ml-[15px] text-[#f4f4f4]">
        <svg viewBox="0 0 17 10" className="h-[10px] w-[17px]" fill="currentColor">
          <path d={group.open ? "M0 10L8.500 0 17 10z" : "M0 0h17L8.500 10z"} />
        </svg>
      </button>
      <Led />
    </>
  );
  return (
    <section className="w-[199px] overflow-hidden rounded-r-[14px]">
      {group.big ? (
        <div className={`h-[78px] rounded-bl-[12px] border-l-2 ${group.color} ${group.edge}`}>
          <h2 className="h-8 pl-[3px] text-[24px] leading-8 text-white">{group.name}</h2>
          <div className="mt-[14px] flex h-6 items-center pr-[11px] pl-[26px]">
            <Dots tone={group.dots} />
            <span className="flex-1" />
            {controls}
          </div>
        </div>
      ) : (
        <div className={`flex h-8 items-center rounded-bl-[12px] pr-[11px] pl-1 ${group.color}`}>
          <h2 className="flex-1 self-start text-[22px] leading-7 text-white">{group.name}</h2>
          {controls}
        </div>
      )}
      <div className={`ml-3 border-l-2 bg-linear-to-b from-transparent to-black/5 ${group.color} ${group.edge}`}>
        {group.tracks.map((t, i) => <TrackHeader key={i} track={t} group={group} />)}
      </div>
    </section>
  );
}

/* ---------- clips on the grid ---------- */

const chordNotes = (w: number) => {
  const half = 55;
  return [
    [0, 1, half, 7], [half + 1, 1, w - half - 2, 7],
    [0, 18, half, 7], [half + 1, 24, w - half - 2, 7],
    [0, 41, half, 7], [half + 1, 41, w - half - 2, 7],
  ];
};

function BodyArt({ clip, w, h }: { clip: Clip; w: number; h: number }) {
  const fill = noteFill[clip.tone] ?? "#ffb99c";
  const rects = (list: number[][]) =>
    list.map(([x, y, rw, rh], i) => <rect key={i} x={x} y={y} width={rw} height={rh} fill={fill} />);
  switch (clip.shape) {
    case "lead":
      return <>{rects([[0, 9, 4, 4], [10, 9, 4, 4], [21, 9, 3, 4], [31, 9, 4, 4], [41, 5, 4, 4], [48, 9, 3, 4], [52, 9, 3, 4]])}</>;
    case "brass":
      return <>{rects([[0, 23, 2, 4]])}</>;
    case "acid":
      return <>{rects([[0, 23, 3, 3], [5, 23, 1, 3], [8, 23, 1, 3], [12, 23, 1, 3], [15, 23, 2, 3], [19, 23, 1, 3], [22, 23, 1, 3], [25, 23, 1, 3]])}</>;
    case "chord":
      return <>{rects(chordNotes(w))}</>;
    case "droneLead":
      return <>{rects([[3, 1, w - 3, 5], [0, h - 4, 6, 4]])}</>;
    case "droneBass":
      return <>{rects([[0, 23, w - 1, 4]])}</>;
    case "bass":
      return (
        <>
          {rects([[8, 2, 1, 3], [17, 2, 1, 3], [22, 2, 1, 3]])}
          <path d={`M0 ${h - 1}H${w}`} stroke={fill} strokeWidth="2" strokeDasharray="4 1 3 1" />
        </>
      );
    case "fade":
      return (
        <g shapeRendering="auto">
          <path d={`M0 ${h}L27 1L31 ${h}z`} fill="rgba(255,200,180,0.16)" />
          <path d={`M0 ${h}L27 2L31 ${h}M24 1h7`} stroke={fill} strokeWidth="1.500" fill="none" />
          <path d="M0 23h16l3-1h9l1 2.500-1 2h-9l-3-1H0z" fill={fill} />
        </g>
      );
    case "hits":
      return (
        <g shapeRendering="auto" fill={fill}>
          {[0, 10, 21, 31, 42].map((x) => (
            <path key={x} d={`M${x} 20q2-6 4-3q1 4 4 6l5 1-5 1q-3 2-4 6q-2 4-4-3z`} />
          ))}
        </g>
      );
    default:
      return null;
  }
}

function ClipView({ clip }: { clip: Clip }) {
  const x = barX(clip.start);
  const w = Math.max(3, barX(clip.end) - x);
  const place = { left: x, width: w };
  const paint = toneBg[clip.tone];

  if (clip.shape === "thin")
    return (
      <div
        className={`absolute inset-y-0 rounded-[2px] border bg-linear-to-b from-white/10 to-transparent shadow-[0_1px_0_#10141c] ${paint}`}
        style={place}
      />
    );

  if (clip.shape === "auto")
    return (
      <div
        className={`absolute top-0 bottom-px flex items-center overflow-hidden rounded-[2px] border bg-linear-to-b from-white/5 to-black/5 ${paint}`}
        style={place}
      >
        <svg className="absolute inset-0 h-full w-full" fill="none" stroke={clip.tone === "brown" ? "#a88c82" : "#cd7658"} strokeWidth="1.500">
          <path d={clip.curve} />
        </svg>
        <AutoIcon className="relative h-5 w-5 shrink-0 text-[#ffe6cc] drop-shadow-[1px_1px_0_#3a1a0c]" />
        <span
          className={`relative ml-[5px] text-[22px] leading-7 whitespace-nowrap [text-shadow:1px_1px_1px_#2a120a] ${
            clip.faint ? "text-[#f6e8e0]/60" : "text-[#f8ece4]"
          }`}
        >
          {clip.label}
        </span>
      </div>
    );

  if (clip.shape === "slices")
    return (
      <>
        {[0, 10, 21, 31, 41].map((dx) => (
          <div key={dx} className="absolute top-0 bottom-px flex w-[7px] flex-col" style={{ left: x + dx }}>
            <div className={`h-[29px] rounded-[2px] border ${paint}`} />
            <svg className="w-full flex-1 bg-[#5c362e]" viewBox="0 0 7 48" preserveAspectRatio="none" fill="#ffb99c">
              <path d="M0 12q3 4 3 11h4v1.500H3q0 7-3 11z" />
            </svg>
          </div>
        ))}
      </>
    );

  const inBass = clip.shape === "bass" || clip.shape === "droneBass";
  const headH = clip.shape === "bass" ? "h-[30px]" : "h-7";
  const bodyH = clip.shape === "bass" ? (clip.tone === "midBass2" ? 48 : 46) : 48;
  return (
    <div className="absolute top-0 bottom-px flex flex-col" style={place}>
      {clip.shape === "hits" ? (
        <div className="flex h-[29px] shrink-0">
          {[0, 1, 2, 3, 4].map((i) => (
            <div key={i} className={`flex flex-1 items-center justify-end overflow-hidden rounded-[2px] border ${paint}`}>
              <svg viewBox="0 0 7 16" className="h-4 w-[7px]" fill="#cf9478"><path d="M0 0q2 6 7 8-5 2-7 8z" /></svg>
            </div>
          ))}
        </div>
      ) : (
        <div className={`flex ${headH} shrink-0 items-center overflow-hidden rounded-[3px] border bg-linear-to-b from-white/5 to-transparent ${paint}`}>
          {clip.shape === "fade" ? (
            <AutoIcon className="ml-px h-5 w-5 shrink-0 text-[#ffe6cc]" />
          ) : (
            <PatternIcon
              className={`ml-[3px] h-[19px] w-[17px] shrink-0 ${
                clip.tone === "midBass2" ? "text-[#c6c6fa]" : clip.tone === "detuned" || clip.tone === "droneBass" ? "text-[#f8d4fc]" : "text-[#e0d0fc]"
              }`}
            />
          )}
          {clip.label && (
            <span className={`ml-[6px] self-start text-[20px] leading-[26px] whitespace-nowrap ${clip.faint ? "text-[#e6e0f4]/60" : "text-[#e8e2f4]"}`}>
              {clip.label}
            </span>
          )}
        </div>
      )}
      <svg className={`w-full flex-1 ${inBass ? "bg-[#4f4341]/90" : "bg-[#60372d]/90"}`} shapeRendering="crispEdges">
        <BodyArt clip={clip} w={w} h={bodyH} />
      </svg>
    </div>
  );
}

const rowHeight: Record<Track["size"], string> = {
  big: "h-[78px]",
  tall: "h-20",
  lock: "h-8",
  sub: "h-2",
};

function Row({ height, clips }: { height: string; clips: Clip[] }) {
  return (
    <div className={`relative border-b border-[#12181f] shadow-[inset_0_-1px_0_rgba(0,0,0,0.22)] ${height}`}>
      {clips.map((c, i) => <ClipView key={i} clip={c} />)}
    </div>
  );
}

function Grid() {
  const lines = Array.from({ length: 83 }, (_, i) => i + 1);
  const stripes = Array.from({ length: 10 }, (_, i) => 5 + i * 8);
  return (
    <div className="relative flex-1 overflow-hidden bg-[#424953]">
      <div className="absolute inset-0">
        {stripes.map((b) => (
          <div key={b} className="absolute inset-y-0 bg-[#3b424b]" style={{ left: barX(b), width: Math.round(4 * BAR) }} />
        ))}
        <div className="absolute inset-y-0 left-0 w-5 bg-[#323d45]" />
        <div className="absolute inset-y-0 bg-[#33434d]" style={{ left: barX(1), width: Math.round(2 * BAR) }} />
        <div className="absolute inset-y-0 right-0 bg-[#2c3e49]" style={{ left: barX(80) }} />
        <div className="absolute inset-y-0 right-0 bg-[#31424d]" style={{ left: barX(81) }} />
        {lines.map((b) =>
          b === 3 ? (
            <div key={b} className="absolute inset-y-0 w-px bg-[#6b7c84]" style={{ left: barX(b) }} />
          ) : (
            <div key={b} className="absolute inset-y-0 w-[2px] bg-[#1e252d]" style={{ left: barX(b) }} />
          ),
        )}
      </div>
      <div className="relative flex flex-col">
        {groups.map((g) => (
          <React.Fragment key={g.name}>
            <Row height={g.big ? "h-[78px]" : "h-8"} clips={[]} />
            {g.tracks.map((t, i) => <Row key={i} height={rowHeight[t.size]} clips={t.clips} />)}
          </React.Fragment>
        ))}
        <div className="absolute bottom-[19px] left-px h-[2px] w-2 bg-[#f07838]" />
      </div>
    </div>
  );
}

/* ---------- window ---------- */

export default function App() {
  return (
    <div className="flex min-h-screen w-full flex-col bg-[#41494e] font-[Roboto,sans-serif]">
      <div className="h-1 bg-[#5b646a]" />
      <TitleBar />
      <main className="flex flex-1 border-[#2a3237]">
        <div className="flex w-4 shrink-0 flex-col items-center justify-center gap-1 border-x border-[#30383d] bg-[#464f53]">
          {[0, 1, 2, 3, 4].map((i) => <span key={i} className="h-1 w-1 bg-[#2c3439]" />)}
        </div>
        <Picker />
        <div className="w-[10px] shrink-0 bg-[#41494f]" />
        <section className="flex min-w-0 flex-1 flex-col border-b-2 border-l-2 border-[#1d262c] bg-[#1d2a31]">
          <div className="flex h-[82px] bg-[#41494e]">
            <button aria-label="Add track" className="relative flex h-full w-[60px] items-end justify-center pb-[17px] pl-1 text-[#dde1e3]">
              <svg viewBox="0 0 60 82" className="absolute inset-0 h-full w-full">
                <path d="M0 80 L18 12 Q21 2 30 2 H59 V80 z" fill="#4c555b" stroke="#626b71" strokeWidth="2" />
                <path d="M0 74 L17 10 Q20 1 30 1 H60" fill="none" stroke="#242c31" strokeWidth="2" />
              </svg>
              <svg viewBox="0 0 16 16" className="relative h-4 w-4" fill="currentColor"><path d="M6.500 0h3v6.500H16v3H9.500V16h-3V9.500H0v-3h6.500z" /></svg>
            </button>
            <div className="border-y-2 border-[#242c31]"><ModePanel /></div>
            <div className="min-w-0 flex-1 border-b-2 border-l-2 border-[#242c31]">
              <MiniMap />
              <Ruler />
            </div>
          </div>
          <div className="flex flex-1">
            <div className="flex w-[201px] shrink-0 flex-col bg-[linear-gradient(to_right,#2b3439_12px,#1d2a31_12px)]">
              {groups.map((g) => <GroupHeader key={g.name} group={g} />)}
              <div className="h-[34px] w-[199px] rounded-tr-[14px] border-l-2 border-[#59636a] bg-[#4a5359] pl-[3px]">
                <h2 className="text-[24px] leading-8 text-[#7d868b]">Track 47</h2>
              </div>
            </div>
            <Grid />
          </div>
        </section>
        <div className={`flex w-[42px] shrink-0 flex-col border-x-2 border-b-2 border-[#1d262c] ${hatch}`}>
          <button aria-label="Options" className={`${btn} mt-[2px] h-[38px] border-2 border-[#626b71] bg-[#4f585e]`}>
            <span className="h-[5px] w-1 bg-[#1d2429]" />
          </button>
          <button aria-label="Scroll up" className={`${btn} mt-[2px] h-[38px] border-2 border-[#626b71] bg-[#4f585e]`}>
            <svg viewBox="0 0 18 10" className="h-[10px] w-[18px]" fill="none" stroke="#1d2429" strokeWidth="2"><path d="M1 9l8-7 8 7" /></svg>
          </button>
          <button aria-label="Scroll thumb" className="mt-[2px] h-[66px] border-2 border-[#626b71] bg-[#4f585e]" />
          <span className="flex-1" />
          <button aria-label="Scroll down" className={`${btn} h-[38px] border-2 border-[#626b71] bg-[#4f585e]`}>
            <svg viewBox="0 0 18 10" className="h-[10px] w-[18px]" fill="none" stroke="#1d2429" strokeWidth="2"><path d="M1 1l8 7 8-7" /></svg>
          </button>
        </div>
        <div className="w-3 shrink-0" />
      </main>
      <footer className="h-3 border-b-2 border-[#262e33]" />
    </div>
  );
}
